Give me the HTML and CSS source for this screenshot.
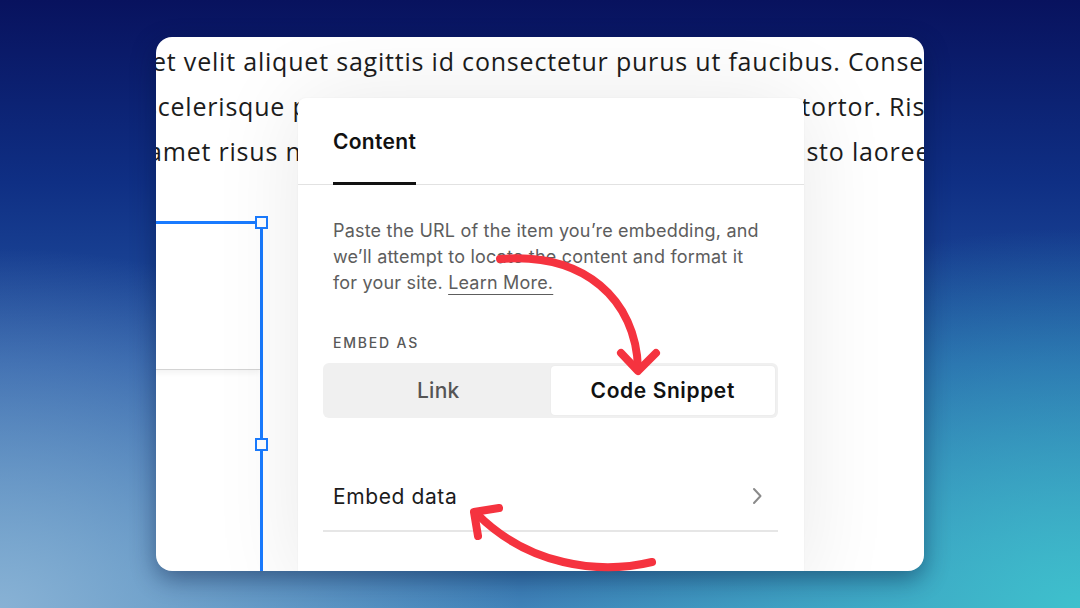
FILE: index.html
```html
<!DOCTYPE html>
<html lang="en">
<head>
<meta charset="utf-8">
<title>Embed block – Code Snippet</title>
<link rel="stylesheet" href="styles.css">
</head>
<body>
<div class="stage">
  <div class="card">
    <div class="prose">
      <div class="line l1">et velit aliquet sagittis id consectetur purus ut faucibus. Consequat</div>
      <div class="line l2"><span>scelerisque purus. Tristique</span><span>in tortor. Risus</span></div>
      <div class="line l3"><span>amet risus nullam</span><span>justo laoreet</span></div>
    </div>

    <div class="selection">
      <div class="sel-block"></div>
      <span class="handle h-top"></span>
      <span class="handle h-mid"></span>
    </div>

    <div class="panel">
      <div class="tabs">
        <div class="tab active">Content</div>
      </div>
      <div class="panel-body">
        <p class="desc">Paste the URL of the item you’re embedding, and we’ll attempt to locate the content and format it for your site. <a class="learn" href="#">Learn More.</a></p>
        <div class="label">EMBED AS</div>
        <div class="segmented">
          <div class="seg">Link</div>
          <div class="seg on">Code Snippet</div>
        </div>
        <div class="row">
          <span class="row-label">Embed data</span>
          <svg class="chev" width="12" height="18" viewBox="0 0 12 18"><path d="M3 2 L9.5 9 L3 16" fill="none" stroke="#8a8a8a" stroke-width="2" stroke-linecap="round" stroke-linejoin="round"/></svg>
        </div>
      </div>
    </div>
  </div>

  <svg class="arrows" width="1080" height="608" viewBox="0 0 1080 608">
    <g fill="none" stroke="#f5333f" stroke-width="8" stroke-linecap="round" stroke-linejoin="round">
      <path d="M500 259 C 585 252, 636 300, 638 368"/>
      <path d="M621 353 L638 371 L656 353"/>
      <path d="M652 562 C 598 575, 528 565, 477 514"/>
      <path d="M499 508 L474 512 L478 536"/>
    </g>
  </svg>
</div>
</body>
</html>
```

FILE: styles.css
```css
* { box-sizing: border-box; }

html, body {
  margin: 0;
  padding: 0;
}

body {
  width: 1080px;
  height: 608px;
  overflow: hidden;
}

.stage {
  position: relative;
  width: 1080px;
  height: 608px;
  display: flex;
  align-items: center;
  justify-content: center;
  background:
    radial-gradient(ellipse 520px 360px at 0% 100%, rgba(140, 180, 214, 0.95), rgba(140, 180, 214, 0) 100%),
    radial-gradient(ellipse 560px 380px at 100% 100%, rgba(62, 196, 206, 0.95), rgba(62, 196, 206, 0) 100%),
    linear-gradient(180deg, #08125e 0%, #0f2f84 30%, #2456a4 60%, #3f82b8 100%);
}

.card {
  position: relative;
  width: 768px;
  height: 534px;
  background: #ffffff;
  border-radius: 16px;
  overflow: hidden;
  box-shadow: 0 8px 24px rgba(4, 20, 60, 0.45);
}

.prose {
  padding-top: 2px;
  font-family: "Open Sans", "Lato", sans-serif;
  font-size: 25px;
  letter-spacing: 0.8px;
  line-height: 45px;
  color: #1c1c1c;
}

.line {
  white-space: nowrap;
}

.l2, .l3 {
  display: flex;
  justify-content: space-between;
}

.l1 { margin-left: -4px; }
.l2 { margin-left: -11px; margin-right: -30px; }
.l3 { margin-left: -8px; margin-right: -16px; }

/* selected block on the left */
.selection {
  position: absolute;
  left: -20px;
  top: 184px;
  width: 127px;
  height: 400px;
  border-top: 3px solid #1a7bff;
  border-right: 3px solid #1a7bff;
}

.sel-block {
  height: 146px;
  background: #ffffff;
  border-bottom: 1px solid #d4d4d4;
  box-shadow: 0 3px 6px rgba(0, 0, 0, 0.05);
}

.handle {
  position: absolute;
  right: -8px;
  width: 13px;
  height: 13px;
  background: #ffffff;
  border: 2.5px solid #1a7bff;
}

.h-top { top: -8px; }
.h-mid { top: 214px; }

/* settings panel */
.panel {
  position: absolute;
  left: 142px;
  top: 61px;
  width: 506px;
  height: 490px;
  background: #ffffff;
  border-radius: 8px 8px 0 0;
  box-shadow: 0 0 90px rgba(0, 0, 0, 0.09), 0 0 2px rgba(0, 0, 0, 0.06);
  font-family: "Inter", "Liberation Sans", sans-serif;
}

.tabs {
  height: 87px;
  padding-left: 35px;
  border-bottom: 1px solid #e2e2e2;
  display: flex;
  align-items: flex-end;
}

.tab {
  height: 100%;
  display: flex;
  align-items: center;
  padding-top: 2px;
  font-size: 21px;
  font-weight: 600;
  letter-spacing: 0.3px;
  color: #111111;
  border-bottom: 3px solid #111111;
  margin-bottom: -1px;
}

.panel-body {
  padding: 33px 26px 0 25px;
}

.desc {
  margin: 0 0 0 10px;
  max-width: 434px;
  font-size: 18px;
  letter-spacing: 0.2px;
  line-height: 26px;
  color: #5d5d5d;
}

.learn {
  color: #5d5d5d;
  text-decoration: underline;
  text-underline-offset: 5px;
  text-decoration-thickness: 1px;
}

.label {
  margin: 38px 0 0 10px;
  font-size: 14px;
  font-weight: 500;
  letter-spacing: 1.8px;
  color: #585858;
  line-height: 18px;
}

.segmented {
  margin-top: 11px;
  height: 55px;
  padding: 3px;
  border-radius: 6px;
  background: #f0f0f0;
  display: grid;
  grid-template-columns: 1fr 1fr;
}

.seg {
  display: flex;
  align-items: center;
  justify-content: center;
  font-size: 21px;
  font-weight: 500;
  letter-spacing: 0.3px;
  color: #555555;
  border-radius: 4px;
}

.seg.on {
  background: #ffffff;
  color: #111111;
  font-weight: 600;
  letter-spacing: 0.6px;
  box-shadow: 0 0 2px rgba(0, 0, 0, 0.06);
}

.row {
  margin-top: 52px;
  height: 62px;
  padding: 0 15px 8px 10px;
  display: flex;
  align-items: center;
  justify-content: space-between;
  border-bottom: 2px solid #e6e6e6;
}

.row-label {
  font-size: 21px;
  letter-spacing: 0.6px;
  color: #1c1c1c;
}

.chev { display: block; }

.arrows {
  position: absolute;
  left: 0;
  top: 0;
  pointer-events: none;
}
```
